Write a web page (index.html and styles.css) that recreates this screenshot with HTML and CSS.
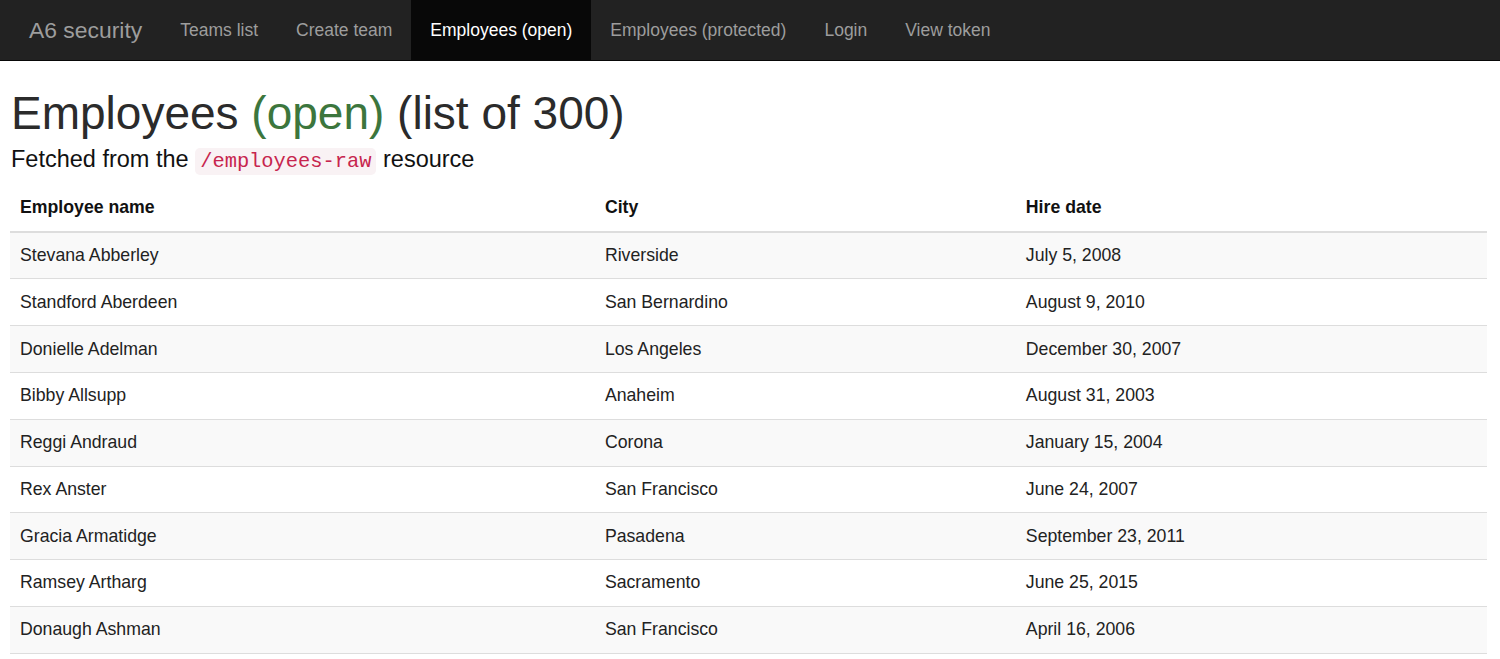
FILE: index.html
```html
<!DOCTYPE html>
<html lang="en">
<head>
<meta charset="utf-8">
<title>A6 security</title>
<link rel="stylesheet" href="styles.css">
</head>
<body>
<nav class="navbar">
  <a class="brand" href="#">A6 security</a>
  <ul class="nav">
    <li><a href="#">Teams list</a></li>
    <li><a href="#">Create team</a></li>
    <li class="active"><a href="#">Employees (open)</a></li>
    <li><a href="#">Employees (protected)</a></li>
    <li><a href="#">Login</a></li>
    <li><a href="#">View token</a></li>
  </ul>
</nav>
<main class="content">
  <h1 class="title">Employees <span class="success">(open)</span> (list of 300)</h1>
  <h4 class="subtitle">Fetched from the <code class="code">/employees-raw</code> resource</h4>
  <table class="table">
    <colgroup>
      <col class="col-name">
      <col class="col-city">
      <col class="col-date">
    </colgroup>
    <thead>
      <tr><th>Employee name</th><th>City</th><th>Hire date</th></tr>
    </thead>
    <tbody>
      <tr><td>Stevana Abberley</td><td>Riverside</td><td>July 5, 2008</td></tr>
      <tr><td>Standford Aberdeen</td><td>San Bernardino</td><td>August 9, 2010</td></tr>
      <tr><td>Donielle Adelman</td><td>Los Angeles</td><td>December 30, 2007</td></tr>
      <tr><td>Bibby Allsupp</td><td>Anaheim</td><td>August 31, 2003</td></tr>
      <tr><td>Reggi Andraud</td><td>Corona</td><td>January 15, 2004</td></tr>
      <tr><td>Rex Anster</td><td>San Francisco</td><td>June 24, 2007</td></tr>
      <tr><td>Gracia Armatidge</td><td>Pasadena</td><td>September 23, 2011</td></tr>
      <tr><td>Ramsey Artharg</td><td>Sacramento</td><td>June 25, 2015</td></tr>
      <tr><td>Donaugh Ashman</td><td>San Francisco</td><td>April 16, 2006</td></tr>
    </tbody>
  </table>
</main>
</body>
</html>
```
FILE: styles.css
```css
* { box-sizing: border-box; }
html, body { margin: 0; padding: 0; }
body {
  font-family: "Liberation Sans", Arial, Helvetica, sans-serif;
  color: #333;
  background: #fff;
}
.navbar {
  display: flex;
  align-items: stretch;
  height: 61px;
  background: #222;
  border-bottom: 1px solid #080808;
  padding: 0 10px;
}
.brand {
  display: flex;
  align-items: center;
  padding: 0 19px;
  font-size: 22.9px;
  color: #9d9d9d;
  text-decoration: none;
}
.nav {
  display: flex;
  list-style: none;
  margin: 0;
  padding: 0;
}
.nav li { display: flex; }
.nav a {
  display: flex;
  align-items: center;
  padding: 0 19px;
  font-size: 17.5px;
  color: #9d9d9d;
  text-decoration: none;
}
.nav .active a {
  background: #080808;
  color: #fff;
}
.content {
  padding: 0 13px 0 10px;
}
.title {
  margin: 27px 0 0 1px;
  font-size: 46px;
  font-weight: 500;
  line-height: 1.1;
  color: #2b2b2b;
}
.success { color: #3c763d; }
.subtitle {
  margin: 8.8px 0 0 1px;
  font-size: 23.5px;
  font-weight: 500;
  line-height: 1.1;
  color: #111;
}
.code {
  font-family: "Liberation Mono", "DejaVu Sans Mono", monospace;
  font-size: 20.4px;
  color: #c7254e;
  background: #f9f2f4;
  padding: 2px 5px;
  border-radius: 5px;
}
.table {
  width: 100%;
  margin-top: 11px;
  border-collapse: collapse;
  table-layout: fixed;
  font-size: 17.7px;
}
.col-name { width: 39.6%; }
.col-city { width: 28.5%; }
.col-date { width: 31.9%; }
.table th, .table td {
  text-align: left;
  padding: 10.4px 10px;
  line-height: 25px;
  vertical-align: top;
}
.table th {
  font-weight: bold;
  color: #111;
  border-bottom: 2px solid #ddd;
}
.table td {
  color: #222;
  border-bottom: 1px solid #ddd;
}
.table tbody tr:nth-child(odd) { background: #f9f9f9; }
```
